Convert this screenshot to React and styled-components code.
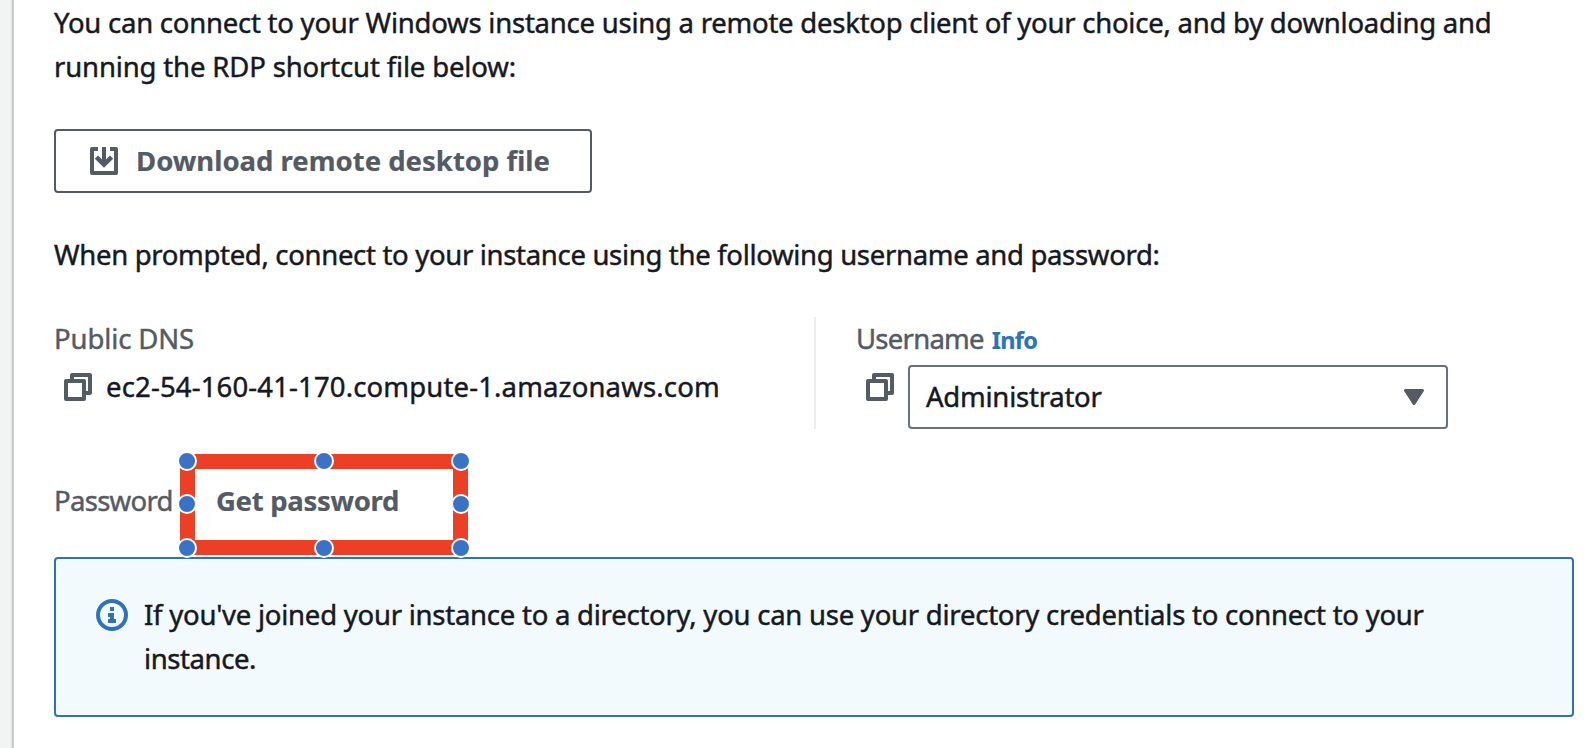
import React from "react";
import styled, { createGlobalStyle } from "styled-components";

const Global = createGlobalStyle`
  * { box-sizing: border-box; }
  body {
    margin: 0;
    background: #ffffff;
    color: #16191f;
    font-family: "Noto Sans", "Open Sans", sans-serif;
    font-size: 27.5px;
    line-height: 44px;
    overflow: hidden;
  }
`;

const Page = styled.div`
  display: flex;
  width: 1594px;
  height: 748px;
  overflow: hidden;
`;

const Gutter = styled.div`
  flex: none;
  width: 14px;
  background: linear-gradient(to right, #f2f3f3 0 10px, #eaeded 11px, #d5dbdb 12px, #b4bbbb 13px, #e0e4e4 14px);
`;

const Panel = styled.main`
  flex: 1;
  display: flex;
  flex-direction: column;
  padding: 1px 20px 0 40px;
`;

const Text = styled.span`
  display: block;
  white-space: nowrap;
  font-weight: ${(p) => p.$weight || 400};
  font-size: ${(p) => p.$size || 27.5}px;
  color: ${(p) => p.$color || "#16191f"};
  letter-spacing: ${(p) => p.$track || 0}px;
  -webkit-text-stroke: ${(p) => (p.$weight ? 0.2 : 0.45)}px currentColor;
`;

const Paragraph = styled.div`
  margin-bottom: ${(p) => p.$gap || 0}px;
`;

const DownloadButton = styled.button`
  display: flex;
  align-items: center;
  gap: 18px;
  width: 538px;
  height: 64px;
  margin: 0 0 40px 0;
  padding: 0 34px;
  border: 2px solid #545b64;
  border-radius: 4px;
  background: #fff;
  font: inherit;
`;

const Columns = styled.div`
  display: flex;
  height: 112px;
  margin-bottom: 25px;
`;

const DnsColumn = styled.div`
  width: 762px;
  border-right: 2px solid #eaeded;
`;

const UserColumn = styled.div`
  padding-left: 40px;
`;

const LabelRow = styled.div`
  display: flex;
  align-items: baseline;
  gap: 8px;
  height: 48px;
`;

const CopyRow = styled.div`
  display: flex;
  align-items: flex-start;
  gap: 14px;
  padding-left: 10px;
`;

const CopySvg = styled.svg`
  flex: none;
  margin-top: 8px;
`;

const Select = styled.div`
  display: flex;
  align-items: center;
  justify-content: space-between;
  width: 540px;
  height: 64px;
  padding: 0 22px 0 16px;
  border: 2px solid #687078;
  border-radius: 4px;
`;

const PasswordRow = styled.div`
  display: flex;
  align-items: flex-start;
  height: 103px;
  padding-top: 25px;
`;

const PasswordLabel = styled.div`
  width: 126px;
`;

const Highlight = styled.div`
  position: relative;
  width: 288px;
  height: 101px;
  margin-top: -25px;
  padding: 10px 0 0 21px;
  border: 15px solid #eb4026;
`;

const Handle = styled.i`
  position: absolute;
  left: ${(p) => p.$x}px;
  top: ${(p) => p.$y}px;
  width: 20px;
  height: 20px;
  margin: -25px 0 0 -25px;
  border: 2px solid #fff;
  border-radius: 50%;
  background: #3a73c6;
`;

const Alert = styled.section`
  display: flex;
  gap: 16px;
  height: 160px;
  padding: 34px 40px;
  border: 2px solid #2e73b8;
  border-radius: 4px;
  background: #f2fafd;
`;

const InfoSvg = styled.svg`
  flex: none;
  margin-top: 6px;
`;

const GREY = "#545b64";

const DownloadIcon = () => (
  <svg width="28" height="28" viewBox="0 0 28 28" fill="none" stroke={GREY} strokeWidth="4">
    <path d="M8 2H2V26H26V2H20" strokeLinejoin="round" />
    <path d="M14 0V18" />
    <path d="M6.4 10.2L14 17.6L21.6 10.2" strokeWidth="4.6" />
  </svg>
);

const CopyIcon = () => (
  <CopySvg width="28" height="28" viewBox="0 0 28 28" fill="none" stroke={GREY} strokeWidth="4" strokeLinejoin="round">
    <path d="M8 8V2H26V20H20" />
    <path d="M2 8H20V26H2Z" />
  </CopySvg>
);

const InfoIcon = () => (
  <InfoSvg width="32" height="32" viewBox="0 0 32 32">
    <circle cx="16" cy="16" r="14" fill="none" stroke="#2e73b8" strokeWidth="4" />
    <path d="M14 8h4v4h-4zM12 14h6v6h2v4h-8v-4h2v-2h-2z" fill="#2e73b8" />
  </InfoSvg>
);

const handles = [
  [7, 7], [144, 7], [281, 7],
  [7, 50], [281, 50],
  [7, 94], [144, 94], [281, 94],
];

export default function App() {
  return (
    <Page>
      <Global />
      <Gutter />
      <Panel>
        <Paragraph $gap={40}>
          <Text $track={-0.235}>You can connect to your Windows instance using a remote desktop client of your choice, and by downloading and</Text>
          <Text $track={-0.15}>running the RDP shortcut file below:</Text>
        </Paragraph>
        <DownloadButton>
          <DownloadIcon />
          <Text $weight={700} $color={GREY}>Download remote desktop file</Text>
        </DownloadButton>
        <Paragraph $gap={40}>
          <Text $track={-0.315}>When prompted, connect to your instance using the following username and password:</Text>
        </Paragraph>
        <Columns>
          <DnsColumn>
            <LabelRow><Text $color={GREY} $track={-0.12}>Public DNS</Text></LabelRow>
            <CopyRow>
              <CopyIcon />
              <Text $track={0.15}>ec2-54-160-41-170.compute-1.amazonaws.com</Text>
            </CopyRow>
          </DnsColumn>
          <UserColumn>
            <LabelRow>
              <Text $color={GREY} $track={-0.75}>Username</Text>
              <Text $color="#2e73b8" $weight={700} $size={23.5} $track={-0.7}>Info</Text>
            </LabelRow>
            <CopyRow>
              <CopyIcon />
              <Select>
                <Text $track={-0.23}>Administrator</Text>
                <svg width="20" height="16" viewBox="0 0 20 16">
                  <path d="M1.5 1.5H18.5L10 14.5Z" fill={GREY} stroke={GREY} strokeWidth="3" strokeLinejoin="round" />
                </svg>
              </Select>
            </CopyRow>
          </UserColumn>
        </Columns>
        <PasswordRow>
          <PasswordLabel><Text $color={GREY} $track={-0.7}>Password</Text></PasswordLabel>
          <Highlight>
            <Text $weight={700} $color={GREY} $track={-0.3}>Get password</Text>
            {handles.map(([x, y]) => <Handle key={`${x}-${y}`} $x={x} $y={y} />)}
          </Highlight>
        </PasswordRow>
        <Alert>
          <InfoIcon />
          <div>
            <Text $track={-0.24}>If you've joined your instance to a directory, you can use your directory credentials to connect to your</Text>
            <Text $track={-0.4}>instance.</Text>
          </div>
        </Alert>
      </Panel>
    </Page>
  );
}
